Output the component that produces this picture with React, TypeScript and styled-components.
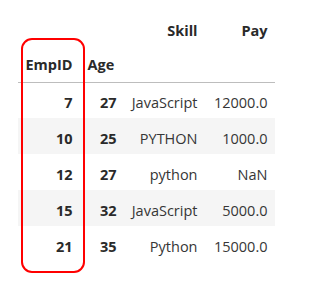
import React from "react";
import styled, { createGlobalStyle } from "styled-components";

const Global = createGlobalStyle`
  html, body { margin: 0; padding: 0; background: #ffffff; }
  body { font-family: "Open Sans", "Noto Sans", Arial, sans-serif; }
`;

const Page = styled.div`
  position: relative;
  width: 309px;
  height: 292px;
  padding: 10px 0 0 18px;
  box-sizing: border-box;
`;

const Table = styled.table`
  width: 257px;
  border-collapse: collapse;
  border-spacing: 0;
  table-layout: fixed;
  font-size: 14.5px;
  color: #2a2a2a;
`;

const Head = styled.thead`
  border-bottom: 1px solid #bdbdbd;
`;

const HeadRow = styled.tr`
  height: 36px;
`;

const Row = styled.tr<{ $striped: boolean }>`
  height: 36px;
  background: ${(p) => (p.$striped ? "#f5f5f5" : "#ffffff")};
`;

const HeadCell = styled.th<{ $w?: number; $align?: string; $top?: number }>`
  box-sizing: border-box;
  width: ${(p) => (p.$w ? `${p.$w}px` : "auto")};
  padding: ${(p) => p.$top ?? 3}px 7.5px 0;
  text-align: ${(p) => p.$align || "right"};
  font-weight: 700;
  white-space: nowrap;
  vertical-align: middle;
  line-height: 1;
`;

const IndexCell = styled.th`
  box-sizing: border-box;
  padding: 6px 7.5px 0;
  text-align: right;
  font-weight: 700;
  line-height: 1;
  white-space: nowrap;
`;

const Cell = styled.td`
  box-sizing: border-box;
  padding: 6px 7.5px 0;
  text-align: right;
  font-weight: 400;
  line-height: 1;
  white-space: nowrap;
  color: #363636;
`;

const Highlight = styled.div`
  position: absolute;
  left: 21px;
  top: 38px;
  width: 64px;
  height: 235px;
  box-sizing: border-box;
  border: 2px solid #ff0000;
  border-radius: 11px;
  pointer-events: none;
`;

const rows = [
  { id: 7, age: 27, skill: "JavaScript", pay: "12000.0" },
  { id: 10, age: 25, skill: "PYTHON", pay: "1000.0" },
  { id: 12, age: 27, skill: "python", pay: "NaN" },
  { id: 15, age: 32, skill: "JavaScript", pay: "5000.0" },
  { id: 21, age: 35, skill: "Python", pay: "15000.0" },
];

export default function App() {
  return (
    <>
      <Global />
      <Page>
        <Table>
          <Head>
            <HeadRow>
              <HeadCell $w={62} $top={6} />
              <HeadCell $w={44} $top={6} />
              <HeadCell $w={81} $top={6}>Skill</HeadCell>
              <HeadCell $w={70} $top={6}>Pay</HeadCell>
            </HeadRow>
            <HeadRow>
              <HeadCell $align="left" $top={2}>EmpID</HeadCell>
              <HeadCell $align="left" $top={2}>Age</HeadCell>
              <HeadCell $top={2} />
              <HeadCell $top={2} />
            </HeadRow>
          </Head>
          <tbody>
            {rows.map((r, i) => (
              <Row key={r.id} $striped={i % 2 === 1}>
                <IndexCell>{r.id}</IndexCell>
                <IndexCell>{r.age}</IndexCell>
                <Cell>{r.skill}</Cell>
                <Cell>{r.pay}</Cell>
              </Row>
            ))}
          </tbody>
        </Table>
        <Highlight />
      </Page>
    </>
  );
}
